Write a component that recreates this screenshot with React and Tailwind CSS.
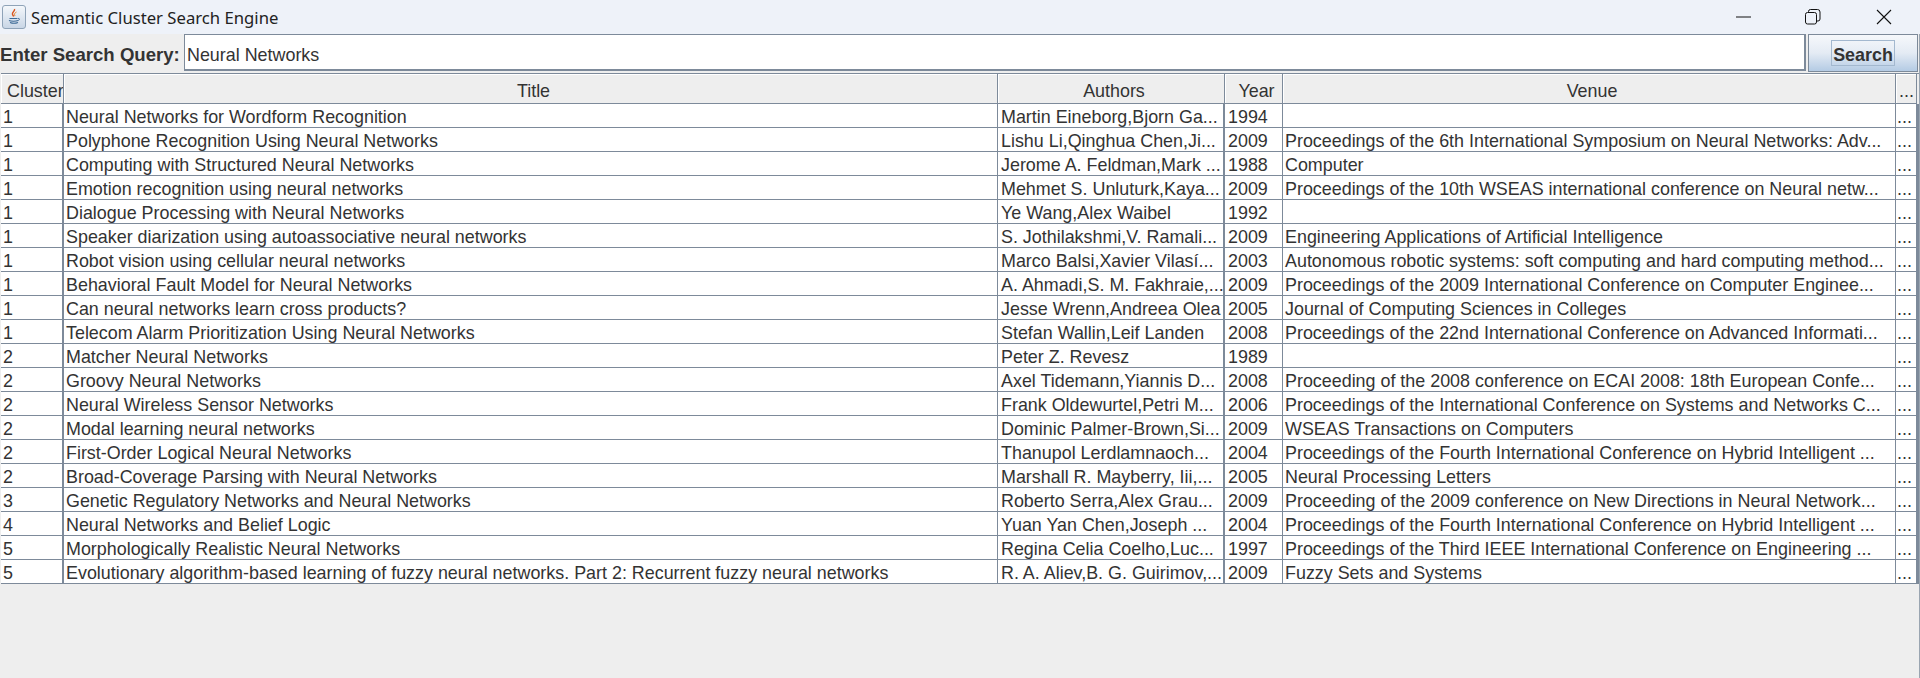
const rows = [
  ["1", "Neural Networks for Wordform Recognition", "Martin Eineborg,Bjorn Ga...", "1994", ""],
  ["1", "Polyphone Recognition Using Neural Networks", "Lishu Li,Qinghua Chen,Ji...", "2009", "Proceedings of the 6th International Symposium on Neural Networks: Adv..."],
  ["1", "Computing with Structured Neural Networks", "Jerome A. Feldman,Mark ...", "1988", "Computer"],
  ["1", "Emotion recognition using neural networks", "Mehmet S. Unluturk,Kaya...", "2009", "Proceedings of the 10th WSEAS international conference on Neural netw..."],
  ["1", "Dialogue Processing with Neural Networks", "Ye Wang,Alex Waibel", "1992", ""],
  ["1", "Speaker diarization using autoassociative neural networks", "S. Jothilakshmi,V. Ramali...", "2009", "Engineering Applications of Artificial Intelligence"],
  ["1", "Robot vision using cellular neural networks", "Marco Balsi,Xavier Vilasí...", "2003", "Autonomous robotic systems: soft computing and hard computing method..."],
  ["1", "Behavioral Fault Model for Neural Networks", "A. Ahmadi,S. M. Fakhraie,...", "2009", "Proceedings of the 2009 International Conference on Computer Enginee..."],
  ["1", "Can neural networks learn cross products?", "Jesse Wrenn,Andreea Olea", "2005", "Journal of Computing Sciences in Colleges"],
  ["1", "Telecom Alarm Prioritization Using Neural Networks", "Stefan Wallin,Leif Landen", "2008", "Proceedings of the 22nd International Conference on Advanced Informati..."],
  ["2", "Matcher Neural Networks", "Peter Z. Revesz", "1989", ""],
  ["2", "Groovy Neural Networks", "Axel Tidemann,Yiannis D...", "2008", "Proceeding of the 2008 conference on ECAI 2008: 18th European Confe..."],
  ["2", "Neural Wireless Sensor Networks", "Frank Oldewurtel,Petri M...", "2006", "Proceedings of the International Conference on Systems and Networks C..."],
  ["2", "Modal learning neural networks", "Dominic Palmer-Brown,Si...", "2009", "WSEAS Transactions on Computers"],
  ["2", "First-Order Logical Neural Networks", "Thanupol Lerdlamnaoch...", "2004", "Proceedings of the Fourth International Conference on Hybrid Intelligent ..."],
  ["2", "Broad-Coverage Parsing with Neural Networks", "Marshall R. Mayberry, Iii,...", "2005", "Neural Processing Letters"],
  ["3", "Genetic Regulatory Networks and Neural Networks", "Roberto Serra,Alex Grau...", "2009", "Proceeding of the 2009 conference on New Directions in Neural Network..."],
  ["4", "Neural Networks and Belief Logic", "Yuan Yan Chen,Joseph ...", "2004", "Proceedings of the Fourth International Conference on Hybrid Intelligent ..."],
  ["5", "Morphologically Realistic Neural Networks", "Regina Celia Coelho,Luc...", "1997", "Proceedings of the Third IEEE International Conference on Engineering ..."],
  ["5", "Evolutionary algorithm-based learning of fuzzy neural networks. Part 2: Recurrent fuzzy neural networks", "R. A. Aliev,B. G. Guirimov,...", "2009", "Fuzzy Sets and Systems"],
];

function JavaIcon() {
  return (
    <div className="w-[24px] h-[24px] ml-[2px] rounded-[3px] border border-[#8fa3b8] bg-gradient-to-b from-[#f4f7fb] to-[#c9d6e6] flex items-center justify-center">
      <svg width="16" height="18" viewBox="0 0 16 18" fill="none">
        <path d="M8.5 1c1 2-3 3-2 5.5.3.8 1 1.3 1.2 2" stroke="#d9541e" strokeWidth="1.4" />
        <path d="M10.5 4c-2 1-2.5 2-1.5 4" stroke="#e8872f" strokeWidth="1" />
        <path d="M3.5 10.5h8M3 12.5c2 1 7 1 9 0M4 14.5c2 .8 6 .8 8 0" stroke="#3d6a96" strokeWidth="1.1" />
        <path d="M12 10.5c2-.5 2 1.5 0 2" stroke="#3d6a96" strokeWidth="0.9" />
      </svg>
    </div>
  );
}

function HeaderCell({ w, children, align = "justify-center pl-[6px]" }) {
  return (
    <div className={`${w} h-full pt-[5px] leading-[16px] flex items-center ${align} overflow-hidden whitespace-nowrap border-r border-[#7d8a9a] bg-[#eeeeee] shadow-[inset_1px_1px_0_#ffffff] text-[#333333]`}>
      {children}
    </div>
  );
}

function Cell({ w, children, border = "border-r", pad = "pl-[2px]" }) {
  return (
    <div className={`${w} h-full ${pad} pt-[3px] leading-[16px] flex items-center whitespace-nowrap overflow-hidden text-[#333333] ${border} border-[#7d8a9a]`}>
      {children}
    </div>
  );
}

export default function App() {
  return (
    <div className="w-[1920px] h-[678px] flex flex-col bg-[#eeeeee] overflow-hidden text-[17.9px] font-['Liberation_Sans',Arial,sans-serif]">
      <div className="h-[34px] bg-[#eef2f9] flex items-center">
        <JavaIcon />
        <span className="ml-[5px] pt-[1px] text-[16.7px] text-[#222222] font-['Noto_Sans',sans-serif]">Semantic Cluster Search Engine</span>
        <div className="ml-auto flex items-center text-[#111111]">
          <svg width="16" height="16" viewBox="0 0 16 16" className="mr-[53px]"><path d="M0 8h15" stroke="#111" strokeWidth="1" /></svg>
          <svg width="16" height="16" viewBox="0 0 16 16" fill="none" className="mr-[55px]">
            <rect x="0.5" y="3.5" width="11" height="11.5" rx="2" stroke="#111" />
            <path d="M3.5 3.5V2.5a2 2 0 0 1 2-2h7a2.5 2.5 0 0 1 2.5 2.5v7a2 2 0 0 1-2 2h-1" stroke="#111" />
          </svg>
          <svg width="16" height="16" viewBox="0 0 16 16" className="mr-[28px]"><path d="M1 1l14 14M15 1L1 15" stroke="#111" strokeWidth="1.1" /></svg>
        </div>
      </div>

      <div className="flex-1 border-r border-[#9aa5b1]">
        <div className="h-[39px] flex items-start">
          <label className="w-[184px] h-[37px] pt-[5px] leading-[16px] flex items-center whitespace-nowrap text-[18.6px] font-bold text-[#333333]">Enter Search Query:</label>
          <input
            readOnly
            value="Neural Networks"
            className="w-[1622px] h-[37px] bg-white border border-[#7d8a9a] border-r-[2px] border-b-[2px] pl-[2px] pr-[3px] pt-[7px] leading-[16px] text-[#333333] outline-none"
          />
          <button className="ml-[2px] w-[110px] h-[38px] border border-[#7d8a9a] bg-gradient-to-b from-[#f6f8fb] via-[#e4ebf4] to-[#b4cbe4] flex items-center justify-center">
            <span className="w-[64px] h-[26px] pt-[3px] leading-[16px] flex items-center justify-center border border-[#a3b8cf] font-bold text-[#333333]">Search</span>
          </button>
        </div>

        <div className="ml-[1px] w-[1918px] border-t border-[#7d8a9a]">
          <div className="flex h-[30px] w-[1916px] border-b border-[#7d8a9a]">
            <HeaderCell w="w-[63px]" align="justify-start pl-[6px]">Cluster</HeaderCell>
            <HeaderCell w="w-[934px]">Title</HeaderCell>
            <HeaderCell w="w-[227px]">Authors</HeaderCell>
            <HeaderCell w="w-[58px]">Year</HeaderCell>
            <HeaderCell w="w-[613px]">Venue</HeaderCell>
            <HeaderCell w="w-[21px]" align="justify-start pl-[3px]">...</HeaderCell>
          </div>
          {rows.map((r, i) => (
            <div key={i} className="flex h-[24px] bg-white border-b border-[#7d8a9a] border-r-[3px] border-r-[#7d8a9a]">
              <Cell w="w-[63px]" border="border-r-[2px]">{r[0]}</Cell>
              <Cell w="w-[934px]">{r[1]}</Cell>
              <Cell w="w-[227px]" border="border-r-[2px]" pad="pl-[3px]">{r[2]}</Cell>
              <Cell w="w-[58px]" pad="pl-[3px]">{r[3]}</Cell>
              <Cell w="w-[613px]">{r[4]}</Cell>
              <Cell w="w-[20px]" border="border-r-0" pad="pl-[1px]">...</Cell>
            </div>
          ))}
        </div>
      </div>
    </div>
  );
}
